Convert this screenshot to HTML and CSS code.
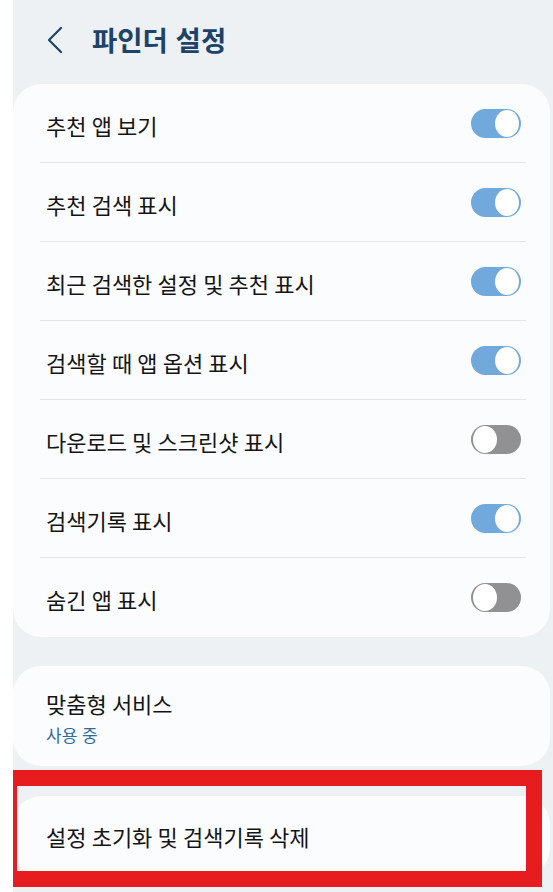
FILE: index.html
```html
<!DOCTYPE html>
<html lang="ko">

<head>
    <meta charset="UTF-8">
    <meta name="viewport" content="width=device-width, initial-scale=1.0">
    <title>파인더 설정</title>
    <link rel="stylesheet" href="styles.css">
</head>

<body>

    <div class="screen">
        <div class="header">
            <svg class="back" width="16" height="28" viewBox="0 0 16 28">
                <path d="M14 2 L2 14 L14 26" fill="none" stroke="#1d4369" stroke-width="2.2" stroke-linecap="round" stroke-linejoin="round"/>
            </svg>
            <span class="title">파인더 설정</span>
        </div>

        <div class="card">
            <div class="row">
                <span>추천 앱 보기</span>
                <span class="switch on"><span class="knob"></span></span>
            </div>
            <div class="row">
                <span>추천 검색 표시</span>
                <span class="switch on"><span class="knob"></span></span>
            </div>
            <div class="row">
                <span>최근 검색한 설정 및 추천 표시</span>
                <span class="switch on"><span class="knob"></span></span>
            </div>
            <div class="row">
                <span>검색할 때 앱 옵션 표시</span>
                <span class="switch on"><span class="knob"></span></span>
            </div>
            <div class="row">
                <span>다운로드 및 스크린샷 표시</span>
                <span class="switch"><span class="knob"></span></span>
            </div>
            <div class="row">
                <span>검색기록 표시</span>
                <span class="switch on"><span class="knob"></span></span>
            </div>
            <div class="row">
                <span>숨긴 앱 표시</span>
                <span class="switch"><span class="knob"></span></span>
            </div>
        </div>

        <div class="card service">
            <div class="service-name">맞춤형 서비스</div>
            <div class="service-status">사용 중</div>
        </div>

        <div class="card reset">
            <span>설정 초기화 및 검색기록 삭제</span>
            <div class="highlight"></div>
        </div>
    </div>

</body>

</html>
```

FILE: styles.css
```css
body {
    margin: 0;
    background-color: #fff;
    font-family: "Noto Sans CJK KR", "Noto Sans", sans-serif;
    color: #141414;
}

.screen {
    margin-left: 13px;
    padding-right: 3px;
    background-color: #eef1f4;
    height: 892px;
    overflow: hidden;
}

.header {
    height: 84px;
    display: flex;
    align-items: center;
    padding-left: 34px;
    box-sizing: border-box;
    padding-bottom: 6px;
}

.back {
    display: block;
    margin-top: 2px;
}

.title {
    margin-left: 29px;
    font-size: 27.5px;
    font-weight: bold;
    color: #1d4369;
}

.card {
    background-color: #fbfcfe;
    border-radius: 28px;
    margin-bottom: 29px;
}

.row {
    height: 79px;
    margin: 0 24px 0 27px;
    padding: 0 5px 0 6px;
    display: flex;
    align-items: center;
    justify-content: space-between;
    border-bottom: 1px solid #e4e6ea;
    font-size: 22px;
    box-sizing: border-box;
}

.row:last-child {
    border-bottom: none;
}

.row span:first-child {
    padding-top: 3px;
    word-spacing: -1px;
}

.switch {
    width: 50px;
    height: 29px;
    border-radius: 15px;
    background-color: #919193;
    display: flex;
    align-items: center;
    padding: 0 2px;
    box-sizing: border-box;
}

.switch.on {
    background-color: #72a9dd;
    justify-content: flex-end;
}

.knob {
    width: 24px;
    height: 24px;
    border-radius: 50%;
    background-color: #fff;
}

.service {
    height: 100px;
    padding: 22px 0 0 33px;
    box-sizing: border-box;
}

.service-name {
    font-size: 22px;
    line-height: 30px;
    word-spacing: -1px;
}

.service-status {
    font-size: 17px;
    line-height: 24px;
    color: #2f6a9e;
    margin-top: 5px;
}

.reset {
    position: relative;
    height: 80px;
    margin-top: 30px;
    padding-left: 33px;
    display: flex;
    align-items: center;
    font-size: 22px;
    word-spacing: -1px;
}

.highlight {
    position: absolute;
    left: -12px;
    top: -26px;
    width: 541px;
    height: 117px;
    border: 16px solid #e61c1f;
    box-sizing: border-box;
}
```
